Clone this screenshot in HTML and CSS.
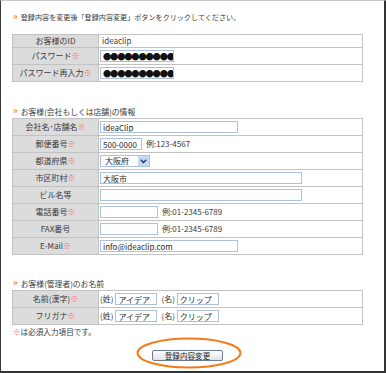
FILE: index.html
```
<!DOCTYPE html>
<html lang="ja">
<head>
<meta charset="utf-8">
<title>登録内容変更</title>
<link rel="stylesheet" href="styles.css">
</head>
<body>
<div class="frame">
  <p class="lead"><span class="mark">»</span>登録内容を変更後「登録内容変更」ボタンをクリックしてください。</p>

  <table class="form t1">
    <colgroup><col class="lab"><col></colgroup>
    <tr class="plain"><th>お客様のID</th><td><div class="cell txt">ideaclip</div></td></tr>
    <tr><th>パスワード<span class="req">※</span></th><td><div class="cell"><span class="box w-pw pw">●●●●●●●●●●</span></div></td></tr>
    <tr><th>パスワード再入力<span class="req">※</span></th><td><div class="cell"><span class="box w-pw pw">●●●●●●●●●●</span></div></td></tr>
  </table>

  <h2 class="sec"><span class="mark">»</span>お客様(会社もしくは店舗)の情報</h2>
  <table class="form">
    <colgroup><col class="lab"><col></colgroup>
    <tr><th>会社名･店舗名<span class="req">※</span></th><td><div class="cell"><input class="box w-name" type="text" value="ideaClip"></div></td></tr>
    <tr><th>郵便番号<span class="req">※</span></th><td><div class="cell"><input class="box w-zip" type="text" value="500-0000"><span class="ex">例:123-4567</span></div></td></tr>
    <tr><th>都道府県<span class="req">※</span></th><td><div class="cell"><span class="box select"><span class="sel-val">大阪府</span><span class="sel-btn"><svg width="7" height="5" viewBox="0 0 7 5"><path d="M0.8 0.8 L3.5 3.6 L6.2 0.8" fill="none" stroke="#24407a" stroke-width="1.5"/></svg></span></span></div></td></tr>
    <tr><th>市区町村<span class="req">※</span></th><td><div class="cell"><input class="box w-long" type="text" value="大阪市"></div></td></tr>
    <tr><th>ビル名等</th><td><div class="cell"><input class="box w-long" type="text" value=""></div></td></tr>
    <tr><th>電話番号<span class="req">※</span></th><td><div class="cell"><input class="box w-tel" type="text" value=""><span class="ex">例:01-2345-6789</span></div></td></tr>
    <tr><th>FAX番号</th><td><div class="cell"><input class="box w-tel" type="text" value=""><span class="ex">例:01-2345-6789</span></div></td></tr>
    <tr><th>E-Mail<span class="req">※</span></th><td><div class="cell"><input class="box w-name" type="text" value="info@ideaclip.com"></div></td></tr>
  </table>

  <h2 class="sec sec3"><span class="mark">»</span>お客様(管理者)のお名前</h2>
  <table class="form">
    <colgroup><col class="lab"><col></colgroup>
    <tr><th>名前(漢字)<span class="req">※</span></th><td><div class="cell"><span class="nm">(姓)</span><input class="box w-kana" type="text" value="アイデア"><span class="nm nm2">(名)</span><input class="box w-kana" type="text" value="クリップ"></div></td></tr>
    <tr><th>フリガナ<span class="req">※</span></th><td><div class="cell"><span class="nm">(姓)</span><input class="box w-kana" type="text" value="アイデア"><span class="nm nm2">(名)</span><input class="box w-kana" type="text" value="クリップ"></div></td></tr>
  </table>
  <p class="note"><span class="req">※</span>は必須入力項目です。</p>

  <div class="actions"><button class="submit" type="button">登録内容変更</button></div>

  <svg class="ring" width="106" height="32" viewBox="0 0 106 32"><ellipse cx="53" cy="16" rx="51.5" ry="14.5" fill="none" stroke="#f27a1a" stroke-width="2"/></svg>
</div>
</body>
</html>
```

FILE: styles.css
```
html, body {
  margin: 0;
  background: #fff;
}
body {
  font-family: "Noto Sans CJK JP", "Noto Sans CJK SC", sans-serif;
  font-size: 8px;
  color: #3a3a3a;
}
.frame {
  position: relative;
  width: 386px;
  height: 373px;
  box-sizing: border-box;
  border-top: 1px solid #c8c8c8;
  border-left: 1px solid #3a3a3a;
  border-right: 2px solid #333;
  border-bottom: 2px solid #333;
  padding: 11px 0 0 11px;
}
.lead, .sec {
  display: flex;
  align-items: center;
  height: 10px;
  margin: 0;
  padding-left: 1px;
  font-weight: normal;
  white-space: nowrap;
}
.lead {
  font-size: 7.1px;
}
.sec {
  font-size: 7.8px;
  margin: 24px 0 2px;
}
.sec3 {
  margin-top: 23px;
}
.mark {
  color: #f08a1c;
  font-weight: bold;
  font-size: 9px;
  line-height: 10px;
  margin-right: 3px;
}
.req {
  color: #ff5c5c;
}
.form {
  width: 351px;
  border-collapse: collapse;
  table-layout: fixed;
}
.t1 {
  margin-top: 12px;
}
.form col.lab {
  width: 86px;
}
.form th, .form td {
  border: 1px solid #c2c2c2;
  padding: 2px 1px;
  line-height: 12px;
}
.form th {
  background: #dcdcdc;
  font-weight: normal;
  text-align: center;
  color: #3a3a3a;
  white-space: nowrap;
}
.form .plain th, .form .plain td {
  padding-top: 0;
  padding-bottom: 0;
}
.cell {
  display: flex;
  align-items: center;
  height: 12px;
  gap: 4px;
  white-space: nowrap;
}
.cell.txt {
  padding-left: 2px;
}
.box {
  box-sizing: border-box;
  height: 12px;
  border: 1px solid #adc1da;
  background: #fff;
  font-family: inherit;
  font-size: 8px;
  line-height: 10px;
  color: #2a2a2a;
  padding: 0 2px;
  margin: 0;
  outline: none;
  border-radius: 0;
}
.pw {
  display: inline-flex;
  align-items: center;
  font-size: 8.2px;
  letter-spacing: -1.1px;
  color: #111;
  overflow: hidden;
}
.w-pw { width: 74px; }
.w-name { width: 138px; }
.w-zip { width: 42px; }
.w-long { width: 202px; }
.w-tel { width: 58px; }
.w-kana { width: 42px; }
.select {
  width: 50px;
  display: inline-flex;
  align-items: center;
  justify-content: space-between;
  padding: 0 0 0 4px;
}
.sel-btn {
  width: 11px;
  height: 10px;
  background: #c9d8f0;
  display: flex;
  align-items: center;
  justify-content: center;
}
.ex {
  color: #3a3a3a;
}
.nm {
  margin-right: -2px;
}
.nm2 {
  margin-left: 0;
}
.note {
  margin: 2px 0 0;
  padding-left: 1px;
  height: 10px;
  line-height: 10px;
  font-size: 7.6px;
}
.actions {
  width: 351px;
  display: flex;
  justify-content: center;
  margin-top: 13px;
}
.submit {
  width: 71px;
  height: 11px;
  box-sizing: border-box;
  padding: 0;
  border: 1px solid #6b7b90;
  border-radius: 2px;
  background: linear-gradient(#ffffff, #dfe3e9);
  font-family: inherit;
  font-size: 7.6px;
  line-height: 9px;
  color: #222;
}
.ring {
  position: absolute;
  left: 135px;
  top: 336px;
}
```
